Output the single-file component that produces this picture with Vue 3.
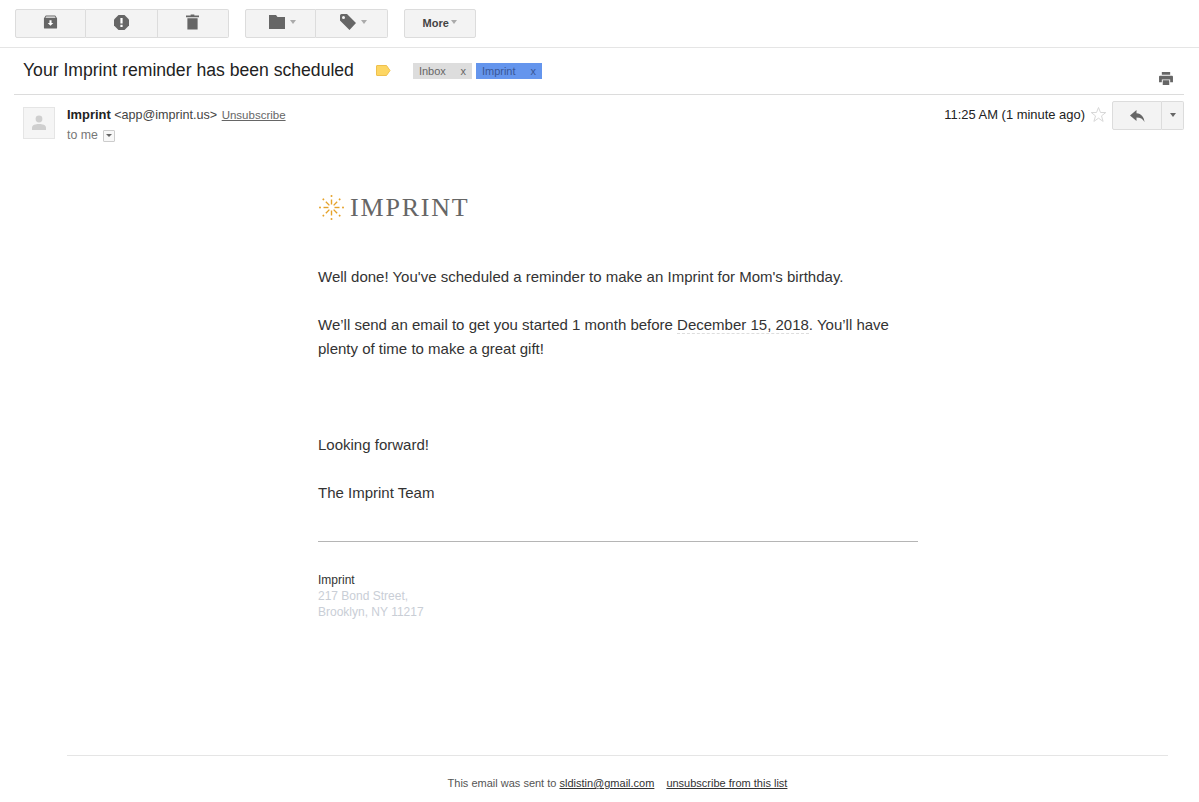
<script setup>
const rays = [0, 45, 90, 135, 180, 225, 270, 315];
</script>

<template>
  <div class="mail-page">
    <div class="toolbar">
      <div class="btn-group">
        <button class="tool-btn">
          <svg width="15" height="14" viewBox="0 0 16 14"><path d="M3 0h10l2 3v10a1 1 0 0 1-1 1H2a1 1 0 0 1-1-1V3zM2.500 2.500h11L12.500 1h-9z" fill="#666" fill-rule="evenodd"/><path d="M6.900 5h2.200v3H11l-3 3-3-3h1.900z" fill="#fff"/></svg>
        </button>
        <button class="tool-btn">
          <svg width="15" height="15" viewBox="0 0 15 15"><path d="M4.500 0h6L15 4.500v6L10.500 15h-6L0 10.500v-6z" fill="#666"/><path d="M6.400 3h2.200v5.600H6.400zM6.400 9.800h2.200V12H6.400z" fill="#fff"/></svg>
        </button>
        <button class="tool-btn">
          <svg width="13" height="16" viewBox="0 0 14 16"><path d="M5 0h4v1h5v2H0V1h5zM1.500 4h11v12h-11z" fill="#666"/></svg>
        </button>
      </div>
      <div class="btn-group">
        <button class="tool-btn has-caret">
          <svg width="16" height="14" viewBox="0 0 16 14"><path d="M0 0h7l1.500 2H16v12H0z" fill="#666"/></svg>
          <span class="caret"></span>
        </button>
        <button class="tool-btn has-caret">
          <svg width="16" height="16" viewBox="0 0 16 16"><path d="M0 1.500A1.500 1.500 0 0 1 1.500 0H7l9 9-6.500 7L0 6.500zM3.500 2a1.500 1.500 0 1 0 0 3 1.500 1.500 0 0 0 0-3z" fill="#666" fill-rule="evenodd"/></svg>
          <span class="caret"></span>
        </button>
      </div>
      <button class="tool-btn more-btn">More<span class="caret small"></span></button>
    </div>

    <div class="subject-row">
      <h1 class="subject">Your Imprint reminder has been scheduled</h1>
      <svg class="label-mark" width="15" height="11" viewBox="0 0 15 11"><path d="M1 .5h9.500L14 5.500l-3.500 5H1a.5.5 0 0 1-.5-.5V1A.5.5 0 0 1 1 .5z" fill="#fdd663" stroke="#efc04e"/></svg>
      <span class="tag tag-grey"><span>Inbox</span><span>x</span></span>
      <span class="tag tag-blue"><span>Imprint</span><span>x</span></span>
      <svg class="print-icon" width="14" height="13" viewBox="0 0 15 14"><path d="M3 0h9v3H3zM1 4h13a1 1 0 0 1 1 1v6h-3V8H3v3H0V5a1 1 0 0 1 1-1zM4 9h7v5H4z" fill="#666"/></svg>
    </div>

    <div class="sender-row">
      <div class="avatar">
        <svg width="14" height="15" viewBox="0 0 14 15"><circle cx="7" cy="4" r="3.400" fill="#cfcfcf"/><path d="M0 15v-2.500C0 10 3.500 9 7 9s7 1 7 3.500V15z" fill="#cfcfcf"/></svg>
      </div>
      <div class="sender-info">
        <div class="sender-line"><b>Imprint</b> <span class="addr">&lt;app@imprint.us&gt;</span> <a class="unsub">Unsubscribe</a></div>
        <div class="to-line">to me <span class="to-drop"><span class="caret tiny"></span></span></div>
      </div>
      <div class="sender-right">
        <span class="time">11:25 AM (1 minute ago)</span>
        <svg class="star" width="17" height="17" viewBox="0 0 17 17"><path d="M8.500 1.500l2 5h5.300l-4.300 3.400 1.600 5.500-4.600-3.200-4.600 3.200 1.600-5.500L1.200 6.500h5.300z" fill="#fff" stroke="#d8d8d8"/></svg>
        <div class="reply-group">
          <button class="reply-btn">
            <svg width="15" height="12" viewBox="0 0 15 12"><path d="M6.500 0v3.200C11.500 3.600 14 7 14.500 12 12.800 8.800 10.500 7.500 6.500 7.500V11L0 5.500z" fill="#666"/></svg>
          </button>
          <button class="reply-more"><span class="caret dark"></span></button>
        </div>
      </div>
    </div>

    <div class="mail-body">
      <div class="logo">
        <svg width="27" height="27" viewBox="-13.500 -13.500 27 27">
          <g v-for="a in rays" :key="a" :transform="`rotate(${a})`">
            <line x1="0" y1="-3" x2="0" y2="-8" stroke="#e5a22a" stroke-width="1.400"/>
            <circle cx="0" cy="-11.500" r="1" fill="#e5a22a"/>
          </g>
        </svg>
        <span class="logo-text">IMPRINT</span>
      </div>
      <p class="para first">Well done! You've scheduled a reminder to make an Imprint for Mom's birthday.</p>
      <p class="para">We’ll send an email to get you started 1 month before <span class="date">December 15, 2018</span>. You’ll have plenty of time to make a great gift!</p>
      <p class="para gap">Looking forward!</p>
      <p class="para">The Imprint Team</p>
      <div class="divider"></div>
      <div class="address">
        <div class="addr-name">Imprint</div>
        <div>217 Bond Street,</div>
        <div>Brooklyn, NY 11217</div>
      </div>
    </div>

    <div class="mail-footer">
      This email was sent to <a>sldistin@gmail.com</a><a class="foot-unsub">unsubscribe from this list</a>
    </div>
  </div>
</template>

<style scoped>
.mail-page {
  position: relative;
  width: 1199px;
  height: 802px;
  overflow: hidden;
  background: #fff;
  color: #222;
  font-family: "Liberation Sans", Arial, sans-serif;
}

.toolbar {
  display: flex;
  align-items: flex-start;
  gap: 16px;
  height: 38px;
  padding: 9px 0 0 15px;
  border-bottom: 1px solid #e5e5e5;
}

.btn-group {
  display: flex;
}

.tool-btn {
  display: flex;
  align-items: center;
  justify-content: center;
  gap: 7px;
  width: 71.330px;
  height: 29px;
  padding: 0 0 3px;
  background: #f3f3f3;
  border: 1px solid #dcdcdc;
  border-left-width: 0;
  font-family: inherit;
}

.tool-btn.has-caret {
  gap: 5px;
  padding-left: 4px;
}

.btn-group .tool-btn:first-child {
  border-left-width: 1px;
  border-radius: 2px 0 0 2px;
}

.btn-group .tool-btn:last-child {
  border-radius: 0 2px 2px 0;
}

.more-btn {
  width: 72px;
  gap: 2px;
  border-left-width: 1px;
  border-radius: 2px;
  font-size: 11px;
  font-weight: 700;
  color: #444;
  padding: 0 0 1px;
}

.caret {
  width: 0;
  height: 0;
  border-left: 3.500px solid transparent;
  border-right: 3.500px solid transparent;
  border-top: 4px solid #aaa;
  margin-top: -1px;
}

.caret.small {
  margin-top: -3px;
}

.caret.tiny {
  border-left-width: 3px;
  border-right-width: 3px;
  border-top: 3px solid #666;
  margin-top: 0;
}

.caret.dark {
  border-top-color: #666;
}

.subject-row {
  position: relative;
  display: flex;
  align-items: center;
  height: 44px;
  margin: 0 15px 0 14px;
  padding: 0 0 2px 9px;
  border-bottom: 1px solid #dcdcdc;
}

.subject {
  margin: 0 22px 0 0;
  font-size: 17.600px;
  font-weight: 400;
  color: #222;
  white-space: nowrap;
}

.label-mark {
  margin-right: 22px;
}

.tag {
  display: flex;
  justify-content: space-between;
  align-items: center;
  box-sizing: border-box;
  height: 16px;
  margin: 2px 4px 0 0;
  padding: 0 6px;
  font-size: 11px;
}

.tag-grey {
  width: 59px;
  background: #dddddd;
  color: #666;
}

.tag-blue {
  width: 66px;
  background: #6495ed;
  color: #3a5795;
}

.print-icon {
  position: absolute;
  right: 11px;
  top: 24px;
}

.sender-row {
  display: flex;
  align-items: flex-start;
  padding: 6px 15px 0 23px;
}

.avatar {
  display: flex;
  align-items: flex-end;
  justify-content: center;
  box-sizing: border-box;
  width: 32px;
  height: 32px;
  margin: 6px 12px 0 0;
  padding-bottom: 8px;
  background: #f5f5f5;
  border: 1px solid #e5e5e5;
}

.sender-info {
  flex: 1;
  padding-top: 7px;
  font-size: 12.350px;
}

.sender-line {
  line-height: 14px;
  white-space: nowrap;
  color: #222;
}

.sender-line b {
  font-size: 12.900px;
}

.addr {
  font-size: 12.600px;
  color: #444;
}

.unsub {
  font-size: 11.500px;
  color: #666;
  text-decoration: underline;
  margin-left: 1px;
}

.to-line {
  display: flex;
  align-items: center;
  gap: 5px;
  margin-top: 6px;
  line-height: 14px;
  color: #777;
}

.to-drop {
  display: flex;
  align-items: center;
  justify-content: center;
  box-sizing: border-box;
  width: 12px;
  height: 12px;
  border: 1px solid #ccc;
  border-radius: 1px;
  background: #f8f8f8;
  margin-top: 1px;
}

.sender-right {
  display: flex;
  align-items: flex-start;
}

.time {
  margin-top: 7px;
  font-size: 12.950px;
  line-height: 14px;
  color: #222;
  white-space: nowrap;
}

.star {
  margin: 5px 5px 0 5px;
}

.reply-group {
  display: flex;
  height: 29px;
}

.reply-btn,
.reply-more {
  display: flex;
  align-items: center;
  justify-content: center;
  height: 29px;
  padding: 0;
  background: #f3f3f3;
  border: 1px solid #dcdcdc;
}

.reply-btn {
  width: 50px;
  border-radius: 2px 0 0 2px;
}

.reply-more {
  width: 22px;
  border-left-width: 0;
  border-radius: 0 2px 2px 0;
}

.mail-body {
  width: 600px;
  margin-left: 318px;
  padding-top: 52px;
}

.logo {
  display: flex;
  align-items: center;
  gap: 5px;
  height: 27px;
}

.logo-text {
  font-family: "Liberation Serif", serif;
  font-size: 26px;
  letter-spacing: 1.800px;
  color: #666;
  line-height: 27px;
}

.para {
  margin: 24px 0 0;
  width: 580px;
  font-size: 15px;
  line-height: 24px;
  color: #333;
}

.para.first {
  margin-top: 44px;
}

.para.gap {
  margin-top: 72px;
}

.date {
  border-bottom: 1px dashed #ddd;
}

.divider {
  height: 1px;
  margin-top: 36px;
  background: #b5b5b5;
}

.address {
  margin-top: 30px;
  font-size: 12px;
  line-height: 16px;
  color: #c9ced6;
}

.addr-name {
  color: #333;
}

.mail-footer {
  position: absolute;
  top: 755px;
  left: 67px;
  width: 1101px;
  padding-top: 20px;
  border-top: 1px solid #e5e5e5;
  text-align: center;
  font-size: 11px;
  line-height: 14px;
  color: #555;
}

.mail-footer a {
  color: #333;
  text-decoration: underline;
}

.foot-unsub {
  margin-left: 12px;
}
</style>
